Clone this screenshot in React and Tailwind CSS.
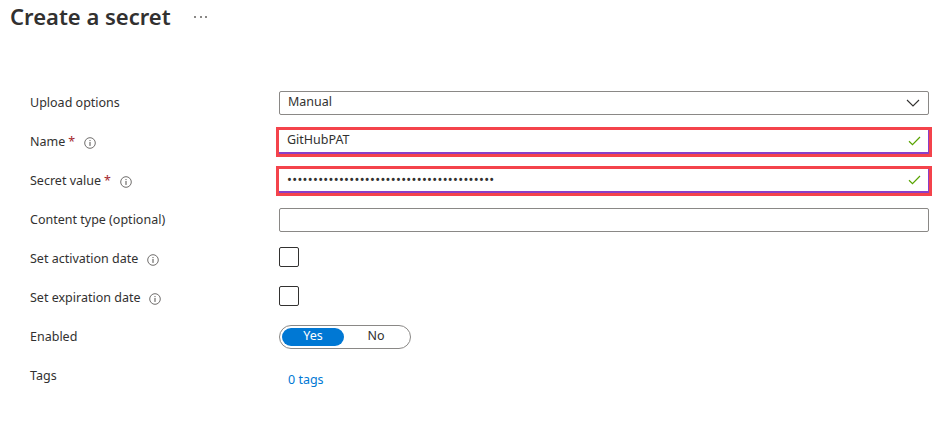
import React from "react";

const font = { fontFamily: '"Segoe UI", "Noto Sans", "Open Sans", sans-serif' };

function Info() {
  return (
    <svg width="12" height="12" viewBox="0 0 12 12" className="ml-[9px] shrink-0">
      <circle cx="6" cy="6" r="5.3" fill="none" stroke="#605e5c" strokeWidth="0.9" />
      <circle cx="6" cy="3.6" r="0.7" fill="#605e5c" />
      <rect x="5.45" y="5" width="1.1" height="3.9" fill="#605e5c" />
    </svg>
  );
}

function Check() {
  return (
    <svg width="13" height="10" viewBox="0 0 13 10" className="absolute right-[7px] top-1/2 -translate-y-1/2">
      <path d="M1 5.2 L4.5 8.6 L12 1" fill="none" stroke="#57a300" strokeWidth="1.2" />
    </svg>
  );
}

function Label({ children, req, info }) {
  return (
    <div className="w-[249px] shrink-0 flex items-center text-[12.5px] text-[#323130] pt-[2px]">
      <span>{children}</span>
      {req && <span className="text-[#a4262c] ml-[3px]">*</span>}
      {info && <Info />}
    </div>
  );
}

function Row({ children }) {
  return <div className="h-[39px] flex items-center">{children}</div>;
}

function Highlighted({ children }) {
  return (
    <div className="flex-1 -ml-[3px] -mr-[3px] h-[30px] border-[3px] border-[#f4434b]">
      <div className="relative h-full border-b-[2px] border-r border-[#8a3fc8] flex items-center pl-[8px] text-[12.5px]">
        {children}
        <Check />
      </div>
    </div>
  );
}

export default function App() {
  return (
    <div className="bg-white w-[933px] h-[422px] overflow-hidden text-[#323130]" style={font}>
      <div className="flex items-center h-[32px] pl-[10px]">
        <h1 className="text-[22px] font-semibold leading-none text-[#323130]">Create a secret</h1>
        <svg width="14" height="4" viewBox="0 0 14 4" className="ml-[23px] mt-[1px]">
          <rect x="0" y="1" width="2" height="2" fill="#8a8886" />
          <rect x="6" y="1" width="2" height="2" fill="#8a8886" />
          <rect x="11" y="1" width="2" height="2" fill="#8a8886" />
        </svg>
      </div>
      <div className="pl-[30px] pt-[51px] pr-[4px]">
        <Row>
          <Label>Upload options</Label>
          <div className="flex-1 h-[24px] border border-[#8a8886] rounded-[2px] flex items-center pl-[8px] pr-[8px] text-[12.5px] justify-between">
            <span>Manual</span>
            <svg width="14" height="8" viewBox="0 0 14 8">
              <path d="M1 1 L7 7 L13 1" fill="none" stroke="#323130" strokeWidth="1.1" />
            </svg>
          </div>
        </Row>
        <Row>
          <Label req info>Name</Label>
          <Highlighted>
            <span>GitHubPAT</span>
          </Highlighted>
        </Row>
        <Row>
          <Label req info>Secret value</Label>
          <Highlighted>
            <span className="text-[13px] tracking-[0.3px] leading-none">••••••••••••••••••••••••••••••••••••••••</span>
          </Highlighted>
        </Row>
        <Row>
          <Label>Content type (optional)</Label>
          <div className="flex-1 h-[24px] border border-[#8a8886] rounded-[2px]" />
        </Row>
        <Row>
          <Label info>Set activation date</Label>
          <div className="w-[20px] h-[20px] border border-[#323130] rounded-[2px] -mt-[3px]" />
        </Row>
        <Row>
          <Label info>Set expiration date</Label>
          <div className="w-[20px] h-[20px] border border-[#323130] rounded-[2px] -mt-[3px]" />
        </Row>
        <Row>
          <Label>Enabled</Label>
          <div className="w-[132px] h-[24px] border border-[#8a8886] rounded-full flex items-center p-[2px] text-[12.5px]">
            <div className="w-[62px] h-[18px] rounded-full bg-[#0078d4] text-white flex items-center justify-center">Yes</div>
            <div className="flex-1 flex items-center justify-center text-[#323130]">No</div>
          </div>
        </Row>
        <Row>
          <Label>Tags</Label>
          <span className="text-[12.5px] text-[#0078d4] pl-[9px] mt-[9px]">0 tags</span>
        </Row>
      </div>
    </div>
  );
}
